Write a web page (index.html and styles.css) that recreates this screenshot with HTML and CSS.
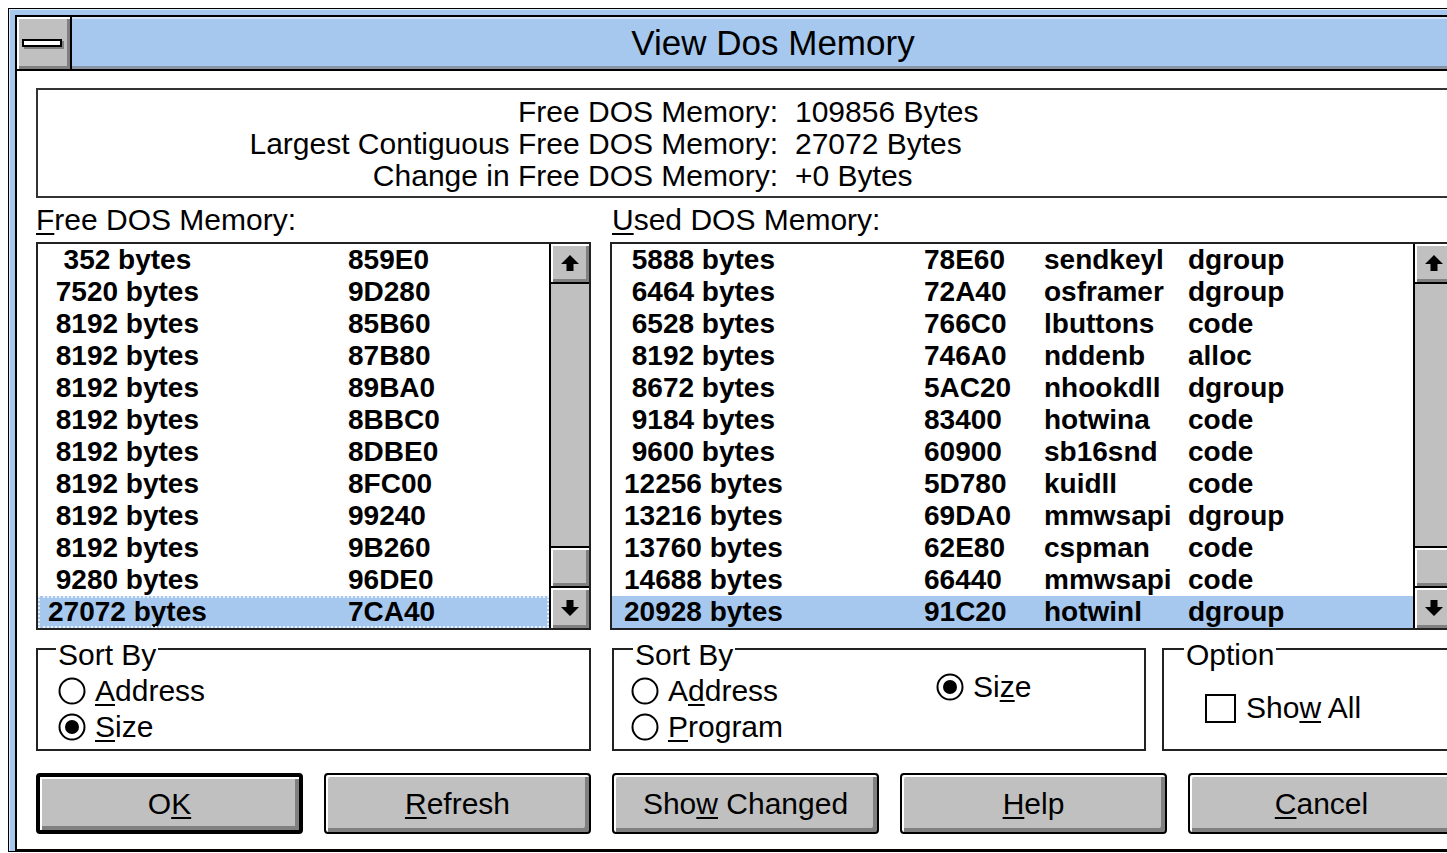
FILE: index.html
```html
<!DOCTYPE html>
<html lang="en">
<head>
<meta charset="utf-8">
<title>View Dos Memory</title>
<link rel="stylesheet" href="styles.css">
</head>
<body>
<svg class="defs" width="0" height="0" aria-hidden="true">
  <symbol id="arrow-up" viewBox="0 0 20 18"><path d="M10 1 L19 10 H13.5 V17 H6.5 V10 H1 Z" fill="#000"/></symbol>
  <symbol id="arrow-down" viewBox="0 0 20 18"><path d="M10 17 L19 8 H13.5 V1 H6.5 V8 H1 Z" fill="#000"/></symbol>
  <symbol id="radio-off" viewBox="0 0 28 28"><circle cx="14" cy="14" r="12.5" fill="#fff" stroke="#000" stroke-width="2"/></symbol>
  <symbol id="radio-on" viewBox="0 0 28 28"><circle cx="14" cy="14" r="12.5" fill="#fff" stroke="#000" stroke-width="2"/><circle cx="14" cy="14" r="7" fill="#000"/></symbol>
</svg>

<div class="window">
  <div class="frame">
    <div class="titlebar">
      <div class="sysmenu"><span class="sysbar"></span></div>
      <div class="caption">View Dos Memory</div>
    </div>

    <div class="client">
      <div class="summary">
        <span class="key">Free DOS Memory:</span><span class="val">109856 Bytes</span>
        <span class="key">Largest Contiguous Free DOS Memory:</span><span class="val">27072 Bytes</span>
        <span class="key">Change in Free DOS Memory:</span><span class="val">+0 Bytes</span>
      </div>

      <div class="lists">
        <div class="pane pane-free">
          <div class="pane-label"><u>F</u>ree DOS Memory:</div>
          <div class="listbox">
            <div class="rows">
              <div class="row free"><span>  352 bytes</span><span>859E0</span></div>
              <div class="row free"><span> 7520 bytes</span><span>9D280</span></div>
              <div class="row free"><span> 8192 bytes</span><span>85B60</span></div>
              <div class="row free"><span> 8192 bytes</span><span>87B80</span></div>
              <div class="row free"><span> 8192 bytes</span><span>89BA0</span></div>
              <div class="row free"><span> 8192 bytes</span><span>8BBC0</span></div>
              <div class="row free"><span> 8192 bytes</span><span>8DBE0</span></div>
              <div class="row free"><span> 8192 bytes</span><span>8FC00</span></div>
              <div class="row free"><span> 8192 bytes</span><span>99240</span></div>
              <div class="row free"><span> 8192 bytes</span><span>9B260</span></div>
              <div class="row free"><span> 9280 bytes</span><span>96DE0</span></div>
              <div class="row free selected focused"><span>27072 bytes</span><span>7CA40</span></div>
            </div>
            <div class="vscroll">
              <div class="sb-btn sb-up"><svg width="20" height="18"><use href="#arrow-up"/></svg></div>
              <div class="sb-track"></div>
              <div class="sb-thumb"></div>
              <div class="sb-btn sb-down"><svg width="20" height="18"><use href="#arrow-down"/></svg></div>
            </div>
          </div>
        </div>

        <div class="pane pane-used">
          <div class="pane-label"><u>U</u>sed DOS Memory:</div>
          <div class="listbox">
            <div class="rows">
              <div class="row used"><span> 5888 bytes</span><span>78E60</span><span>sendkeyl</span><span>dgroup</span></div>
              <div class="row used"><span> 6464 bytes</span><span>72A40</span><span>osframer</span><span>dgroup</span></div>
              <div class="row used"><span> 6528 bytes</span><span>766C0</span><span>lbuttons</span><span>code</span></div>
              <div class="row used"><span> 8192 bytes</span><span>746A0</span><span>nddenb</span><span>alloc</span></div>
              <div class="row used"><span> 8672 bytes</span><span>5AC20</span><span>nhookdll</span><span>dgroup</span></div>
              <div class="row used"><span> 9184 bytes</span><span>83400</span><span>hotwina</span><span>code</span></div>
              <div class="row used"><span> 9600 bytes</span><span>60900</span><span>sb16snd</span><span>code</span></div>
              <div class="row used"><span>12256 bytes</span><span>5D780</span><span>kuidll</span><span>code</span></div>
              <div class="row used"><span>13216 bytes</span><span>69DA0</span><span>mmwsapi</span><span>dgroup</span></div>
              <div class="row used"><span>13760 bytes</span><span>62E80</span><span>cspman</span><span>code</span></div>
              <div class="row used"><span>14688 bytes</span><span>66440</span><span>mmwsapi</span><span>code</span></div>
              <div class="row used selected"><span>20928 bytes</span><span>91C20</span><span>hotwinl</span><span>dgroup</span></div>
            </div>
            <div class="vscroll">
              <div class="sb-btn sb-up"><svg width="20" height="18"><use href="#arrow-up"/></svg></div>
              <div class="sb-track"></div>
              <div class="sb-thumb"></div>
              <div class="sb-btn sb-down"><svg width="20" height="18"><use href="#arrow-down"/></svg></div>
            </div>
          </div>
        </div>
      </div>

      <div class="groups">
        <fieldset class="group group-free">
          <legend>Sort By</legend>
          <div class="choices">
            <div class="choice"><svg class="radio" width="28" height="28"><use href="#radio-off"/></svg><span><u>A</u>ddress</span></div>
            <div class="choice"><svg class="radio" width="28" height="28"><use href="#radio-on"/></svg><span><u>S</u>ize</span></div>
          </div>
        </fieldset>

        <fieldset class="group group-used">
          <legend>Sort By</legend>
          <div class="choices two-col">
            <div class="choice"><svg class="radio" width="28" height="28"><use href="#radio-off"/></svg><span>A<u>d</u>dress</span></div>
            <div class="choice raised"><svg class="radio" width="28" height="28"><use href="#radio-on"/></svg><span>Si<u>z</u>e</span></div>
            <div class="choice"><svg class="radio" width="28" height="28"><use href="#radio-off"/></svg><span><u>P</u>rogram</span></div>
          </div>
        </fieldset>

        <fieldset class="group group-option">
          <legend>Option</legend>
          <div class="check"><span class="checkbox"></span><span>Sho<u>w</u> All</span></div>
        </fieldset>
      </div>

      <div class="buttons">
        <button class="btn default">O<u>K</u></button>
        <button class="btn"><u>R</u>efresh</button>
        <button class="btn">Sho<u>w</u> Changed</button>
        <button class="btn"><u>H</u>elp</button>
        <button class="btn"><u>C</u>ancel</button>
      </div>
    </div>
  </div>
</div>
</body>
</html>
```

FILE: styles.css
```css
* { box-sizing: border-box; }

html, body {
  margin: 0;
  padding: 0;
  background: #fff;
  overflow: hidden;
}

body {
  width: 1447px;
  height: 853px;
  font-family: "Liberation Sans", Arial, sans-serif;
  color: #000;
}

.defs { position: absolute; width: 0; height: 0; }

u {
  text-decoration-thickness: 2px;
  text-underline-offset: 3px;
}

/* window frame */
.window {
  margin: 8px 0 0 8px;
  width: 1475px;
  border: 1px solid #000;
  background: #a6c8ee;
  padding: 6px 6px 0 6px;
  box-shadow: inset 1px 1px #dbe8f8;
}

.frame {
  border: 2px solid #000;
}

.titlebar {
  display: flex;
  height: 54px;
  border-bottom: 2px solid #000;
}

.sysmenu {
  width: 55px;
  background: #c0c0c0;
  border-right: 2px solid #000;
  box-shadow: inset 2px 2px #fff, inset -3px -3px #808080;
  display: flex;
  align-items: center;
  justify-content: center;
  padding-right: 3px;
}

.sysbar {
  width: 40px;
  height: 8px;
  background: #fff;
  border: 2px solid #000;
  box-shadow: 2px 2px #808080;
}

.caption {
  flex: 1;
  background: #a6c8ee;
  text-align: center;
  font-size: 35px;
  line-height: 52px;
  box-shadow: inset 0 2px #d3e3f7, inset 0 -3px #8894a4;
}

/* client area */
.client {
  background: #fff;
  height: 778px;
  padding: 17px 19px 0;
  font-size: 30px;
}

.summary {
  border: 2px solid #333;
  padding: 6px 0 4px;
  display: grid;
  grid-template-columns: 740px 1fr;
  column-gap: 17px;
  line-height: 32px;
}

.summary .key { text-align: right; }

.lists {
  display: flex;
  gap: 19px;
  margin-top: 6px;
}

.pane-free { width: 555px; }
.pane-used { width: 845px; }
.pane-used .pane-label { padding-left: 2px; }

.pane-label {
  line-height: 32px;
  height: 32px;
}

.listbox {
  margin-top: 6px;
  display: flex;
  border: 2px solid #222;
  height: 388px;
}

.rows {
  flex: 1;
  background: #fff;
}

.row {
  display: grid;
  height: 32px;
  line-height: 32px;
  font-weight: bold;
  font-size: 28px;
  white-space: pre;
}

.row.free {
  grid-template-columns: 300px 1fr;
  padding-left: 10px;
}

.row.used {
  grid-template-columns: 300px 120px 144px 1fr;
  padding-left: 12px;
}

.row.selected { background: #a6c8ee; }
.row.focused { outline: 2px dotted #e8f0fb; outline-offset: -2px; }

/* scroll bar */
.vscroll {
  width: 40px;
  border-left: 2px solid #000;
  display: flex;
  flex-direction: column;
  background: #c0c0c0;
}

.sb-btn {
  background: #c0c0c0;
  box-shadow: inset 2px 2px #fff, inset -3px -3px #808080;
  display: flex;
  align-items: center;
  justify-content: center;
}

.sb-btn svg { flex: none; }

.sb-up {
  height: 40px;
  border-bottom: 2px solid #000;
}

.sb-track { flex: 1; background: #c0c0c0; }

.sb-thumb {
  height: 40px;
  border-top: 2px solid #000;
  background: #c0c0c0;
  box-shadow: inset 2px 2px #fff, inset -3px -3px #808080;
}

.sb-down {
  height: 42px;
  border-top: 2px solid #000;
}

/* group boxes */
.groups {
  display: flex;
  margin-top: 0;
}

.group {
  margin: 0;
  border: 2px solid #222;
  padding: 5px 0 4px;
  min-width: 0;
}

.group legend {
  font-size: 30px;
  line-height: 26px;
  padding: 12px 2px 0;
}

.group-free { width: 555px; padding-left: 20px; }
.group-free legend { margin-left: -2px; }

.group-used { width: 534px; margin-left: 21px; padding-left: 17px; }
.group-used legend { margin-left: 2px; }

.group-option { width: 293px; margin-left: 16px; padding-left: 41px; }
.group-option legend { margin-left: -21px; }

.choices { display: grid; }

.choices.two-col {
  grid-template-columns: 305px 1fr;
}

.choices.two-col .choice:nth-child(3) { grid-column: 1; }

.choice {
  display: flex;
  align-items: center;
  height: 36px;
  gap: 9px;
}

.choice.raised { margin-top: -4px; }

.radio { flex: none; }

.check {
  display: flex;
  align-items: center;
  gap: 10px;
  height: 72px;
  padding-bottom: 2px;
}

.checkbox {
  width: 31px;
  height: 29px;
  border: 2px solid #000;
  background: #fff;
}

/* push buttons */
.buttons {
  display: flex;
  gap: 21px;
  margin-top: 22px;
}

.btn {
  width: 267px;
  height: 61px;
  border: 2px solid #000;
  border-radius: 4px;
  background: #c0c0c0;
  box-shadow: inset 2px 2px #fff, inset -4px -4px #808080;
  font-family: "Liberation Sans", Arial, sans-serif;
  font-size: 30px;
  color: #000;
  padding: 0;
}

.btn.default {
  border-width: 4px;
}
```
